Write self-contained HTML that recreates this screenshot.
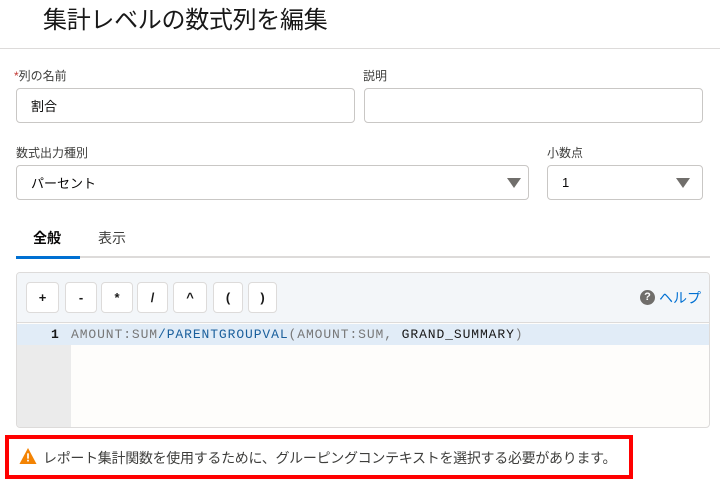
<!DOCTYPE html>
<html><head><meta charset="utf-8"><style>
*{box-sizing:border-box;margin:0;padding:0}
body{width:720px;height:484px;background:#fff;font-family:"Liberation Sans","Noto Sans CJK JP",sans-serif;color:#080707;position:relative;overflow:hidden}
.a{position:absolute}
.title{left:43px;top:0px;font-size:24px;color:#181818;letter-spacing:-0.3px}
.hr{left:0;top:48px;width:720px;height:1px;background:#dddbda}
.lbl{font-size:12px;color:#3e3e3c}
.inp{border:1px solid #c9c7c5;border-radius:4px;background:#fff;font-size:13px;padding-left:14px;display:flex;align-items:center}
.tri{position:absolute;width:0;height:0;border-left:7px solid transparent;border-right:7px solid transparent;border-top:10px solid #706e6b}
.btn{position:absolute;top:282px;height:31px;border:1px solid #dddbda;border-radius:4px;background:#fff;font-size:13px;font-weight:bold;display:flex;align-items:center;justify-content:center;color:#181818}
.code{font-family:"Liberation Mono",monospace;font-size:13px;letter-spacing:0.9px}
</style></head><body>
<div class="a title">集計レベルの数式列を編集</div>
<div class="a hr"></div>
<div class="a lbl" style="left:14px;top:67px"><span style="color:#c23934">*</span>列の名前</div>
<div class="a lbl" style="left:363px;top:67px">説明</div>
<div class="a inp" style="left:16px;top:88px;width:339px;height:35px">割合</div>
<div class="a inp" style="left:364px;top:88px;width:339px;height:35px"></div>
<div class="a lbl" style="left:16px;top:144px">数式出力種別</div>
<div class="a lbl" style="left:547px;top:144px">小数点</div>
<div class="a inp" style="left:16px;top:165px;width:513px;height:35px">パーセント<div class="tri" style="left:490px;top:12px"></div></div>
<div class="a inp" style="left:547px;top:165px;width:156px;height:35px">1<div class="tri" style="left:128px;top:12px"></div></div>
<div class="a" style="left:33px;top:228px;font-size:14px;font-weight:bold">全般</div>
<div class="a" style="left:98px;top:228px;font-size:14px;color:#3e3e3c">表示</div>
<div class="a" style="left:16px;top:256px;width:694px;height:2px;background:#dddbda"></div>
<div class="a" style="left:16px;top:256px;width:64px;height:3px;background:#0070d2"></div>
<div class="a" style="left:16px;top:272px;width:694px;height:156px;border:1px solid #dddbda;border-radius:4px;background:#fefdfb;overflow:hidden">
 <div class="a" style="left:0;top:0;width:694px;height:50px;background:#f3f6f9;border-bottom:1px solid #dddbda"></div>
 <div class="a" style="left:0;top:72px;width:54px;height:84px;background:#ebebeb"></div>
 <div class="a" style="left:0;top:51px;width:694px;height:21px;background:#e1ecf7"></div>
 <div class="a code" style="left:34px;top:54px;color:#181818;font-weight:bold">1</div>
 <div class="a code" style="left:54px;top:54px;color:#777"><span>AMOUNT:SUM</span><span style="color:#1a5f9c">/PARENTGROUPVAL</span>(AMOUNT:SUM, <span style="color:#181818">GRAND_SUMMARY</span>)</div>
</div>
<div class="btn" style="left:26px;width:33px">+</div>
<div class="btn" style="left:65px;width:32px">-</div>
<div class="btn" style="left:101px;width:32px">*</div>
<div class="btn" style="left:137px;width:31px">/</div>
<div class="btn" style="left:173px;width:34px">^</div>
<div class="btn" style="left:213px;width:30px">(</div>
<div class="btn" style="left:248px;width:29px">)</div>
<div class="a" style="left:640px;top:290px;width:15px;height:15px;border-radius:50%;background:#706e6b;color:#fff;font-size:11px;font-weight:bold;text-align:center;line-height:15px">?</div>
<div class="a" style="left:659px;top:288px;font-size:14px;color:#0070d2">ヘルプ</div>
<div class="a" style="left:5px;top:435px;width:628px;height:44px;border:4px solid #f00"></div>
<svg class="a" style="left:19px;top:448px" width="18" height="16" viewBox="0 0 16 15"><path d="M8 0L16 15H0Z" fill="#f38303"/><rect x="7.2" y="5" width="1.6" height="5" fill="#fff"/><rect x="7.2" y="11" width="1.6" height="1.6" fill="#fff"/></svg>
<div class="a" style="left:43px;top:448px;font-size:14px;color:#3e3e3c;letter-spacing:-0.3px">レポート集計関数を使用するために、グルーピングコンテキストを選択する必要があります。</div>
</body></html>
